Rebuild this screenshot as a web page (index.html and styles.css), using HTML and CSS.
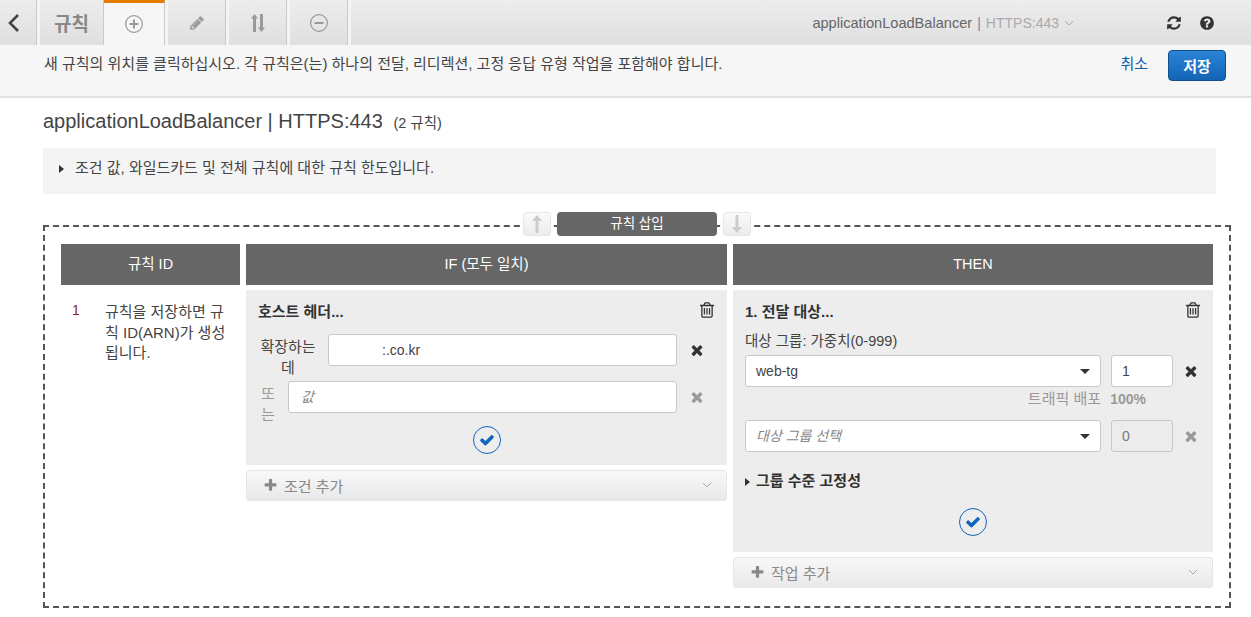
FILE: index.html
```html
<!DOCTYPE html>
<html lang="ko">
<head>
    <meta charset="UTF-8">
    <title>규칙</title>
    <link rel="stylesheet" href="styles.css">
</head>
<body>
    <svg class="icon-defs" width="0" height="0">
        <symbol id="i-check" viewBox="0 0 1792 1792"><path d="M1671 566q0 40-28 68l-724 724-136 136q-28 28-68 28t-68-28l-136-136-362-362q-28-28-28-68t28-68l136-136q28-28 68-28t68 28l294 295 656-657q28-28 68-28t68 28l136 136q28 28 28 68z"/></symbol>
        <symbol id="i-times" viewBox="0 0 1792 1792"><path d="M1490 1322q0 40-28 68l-136 136q-28 28-68 28t-68-28l-294-294-294 294q-28 28-68 28t-68-28l-136-136q-28-28-28-68t28-68l294-294-294-294q-28-28-28-68t28-68l136-136q28-28 68-28t68 28l294 294 294-294q28-28 68-28t68 28l136 136q28 28 28 68t-28 68l-294 294 294 294q28 28 28 68z"/></symbol>
        <symbol id="i-trash" viewBox="0 0 1792 1792"><path d="M704 736v576q0 14-9 23t-23 9h-64q-14 0-23-9t-9-23v-576q0-14 9-23t23-9h64q14 0 23 9t9 23zm256 0v576q0 14-9 23t-23 9h-64q-14 0-23-9t-9-23v-576q0-14 9-23t23-9h64q14 0 23 9t9 23zm256 0v576q0 14-9 23t-23 9h-64q-14 0-23-9t-9-23v-576q0-14 9-23t23-9h64q14 0 23 9t9 23zm128 724v-948h-896v948q0 22 7 40.5t14.5 27 10.5 8.5h832q3 0 10.5-8.5t14.5-27 7-40.5zm-672-1076h448l-48-117q-7-9-17-11h-317q-10 2-17 11zm928 32v64q0 14-9 23t-23 9h-96v948q0 83-47 143.5t-113 60.5h-832q-66 0-113-58.5t-47-141.5v-952h-96q-14 0-23-9t-9-23v-64q0-14 9-23t23-9h309l70-167q15-37 54-63t79-26h320q40 0 79 26t54 63l70 167h309q14 0 23 9t9 23z"/></symbol>
        <symbol id="i-plus" viewBox="0 0 1792 1792"><path d="M1600 736v192q0 40-28 68t-68 28h-416v416q0 40-28 68t-68 28h-192q-40 0-68-28t-28-68v-416h-416q-40 0-68-28t-28-68v-192q0-40 28-68t68-28h416v-416q0-40 28-68t68-28h192q40 0 68 28t28 68v416h416q40 0 68 28t28 68z"/></symbol>
    </svg>

    <div class="top-nav">
        <div class="nav-tab back-tab">
            <svg width="14" height="20" viewBox="0 0 14 20"><path d="M11 2 3 10l8 8" fill="none" stroke="#444" stroke-width="2.6"/></svg>
        </div>
        <div class="nav-tab title-tab">규칙</div>
        <div class="nav-tab active-tab">
            <svg width="20" height="20" viewBox="0 0 20 20"><circle cx="10" cy="10" r="8.4" fill="none" stroke="#999" stroke-width="1.2"/><path d="M10 5.5v9M5.5 10h9" stroke="#999" stroke-width="2"/></svg>
        </div>
        <div class="nav-tab">
            <svg width="16" height="16" viewBox="0 0 1792 1792" fill="#999"><path d="M491 1536l91-91-235-235-91 91v107h128v128h107zm523-928q0-22-22-22-10 0-17 7l-542 542q-7 7-7 17 0 22 22 22 10 0 17-7l542-542q7-7 7-17zm-54-192l416 416-832 832h-416v-416zm683 96q0 53-37 90l-166 166-416-416 166-165q36-38 90-38 53 0 91 38l235 234q37 39 37 91z"/></svg>
        </div>
        <div class="nav-tab">
            <svg width="14" height="18" viewBox="0 0 14 18" fill="#999"><path d="M3.5 0 7 4.5H5V18H2V4.500H0zM10.500 18 7 13.500h2V0h3v13.500h2z"/></svg>
        </div>
        <div class="nav-tab">
            <svg width="20" height="20" viewBox="0 0 20 20"><circle cx="10" cy="10" r="8.400" fill="none" stroke="#999" stroke-width="1.200"/><path d="M5.500 10h9" stroke="#999" stroke-width="2"/></svg>
        </div>
        <div class="nav-fill">
            <div class="listener">
                <span class="lb-name">applicationLoadBalancer</span>
                <span class="pipe">|</span>
                <span class="port">HTTPS:443</span>
                <svg width="10" height="6" viewBox="0 0 10 6"><path d="M1 1l4 4 4-4" fill="none" stroke="#aaa" stroke-width="1"/></svg>
            </div>
            <svg class="nav-icon" width="16" height="16" viewBox="0 0 1792 1792" fill="#333"><path d="M1639 1056q0 5-1 7-64 268-268 434.5t-478 166.5q-146 0-282.5-55t-243.5-157l-129 129q-19 19-45 19t-45-19-19-45v-448q0-26 19-45t45-19h448q26 0 45 19t19 45-19 45l-137 137q71 66 161 102t187 36q134 0 250-65t186-179q11-17 53-117 8-23 30-23h192q13 0 22.5 9.5t9.5 22.5zm25-800v448q0 26-19 45t-45 19h-448q-26 0-45-19t-19-45 19-45l138-138q-148-137-349-137-134 0-250 65t-186 179q-11 17-53 117-8 23-30 23h-199q-13 0-22.5-9.5t-9.5-22.5v-7q65-268 270-434.5t480-166.5q146 0 284 55.5t245 156.5l130-129q19-19 45-19t45 19 19 45z"/></svg>
            <svg class="nav-icon" width="16" height="16" viewBox="0 0 1792 1792" fill="#333"><path d="M1024 1376v-192q0-14-9-23t-23-9h-192q-14 0-23 9t-9 23v192q0 14 9 23t23 9h192q14 0 23-9t9-23zm256-672q0-88-55.5-163t-138.5-116-170-41q-243 0-371 213-15 24 8 42l132 100q7 6 19 6 16 0 25-12 53-68 86-92 34-24 86-24 48 0 85.5 26t37.5 59q0 38-20 61t-68 45q-63 28-115.5 86.5t-52.5 125.5v36q0 14 9 23t23 9h192q14 0 23-9t9-23q0-19 21.5-49.5t54.5-49.5q32-18 49-28.5t46-35 44.5-48 28-60.5 12.5-81zm384 192q0 209-103 385.5t-279.5 279.5-385.500 103-385.500-103-279.500-279.500-103-385.500 103-385.500 279.500-279.500 385.500-103 385.500 103 279.500 279.500 103 385.500z"/></svg>
        </div>
    </div>

    <div class="sub-bar">
        <p>새 규칙의 위치를 클릭하십시오. 각 규칙은(는) 하나의 전달, 리디렉션, 고정 응답 유형 작업을 포함해야 합니다.</p>
        <a class="cancel">취소</a>
        <button class="save-button">저장</button>
    </div>

    <div class="content">
        <h1>applicationLoadBalancer | HTTPS:443 <small>(2 규칙)</small></h1>

        <div class="limits"><span class="caret"></span>조건 값, 와일드카드 및 전체 규칙에 대한 규칙 한도입니다.</div>

        <div class="insert-area">
            <div class="insert-controls">
                <div class="arrow-button">
                    <svg width="10" height="18" viewBox="0 0 10 18" fill="#ccc"><path d="M5 0l5 6H6.500v12h-3V6H0z"/></svg>
                </div>
                <div class="insert-button">규칙 삽입</div>
                <div class="arrow-button">
                    <svg width="10" height="18" viewBox="0 0 10 18" fill="#ccc"><path d="M5 18l5-6H6.500V0h-3v12H0z"/></svg>
                </div>
            </div>

            <div class="rule-grid">
                <div class="col-head">규칙 ID</div>
                <div class="col-head">IF (모두 일치)</div>
                <div class="col-head">THEN</div>

                <div class="rule-id">
                    <span class="rule-num">1</span>
                    <p>규칙을 저장하면 규칙 ID(ARN)가 생성됩니다.</p>
                </div>

                <div class="rule-col">
                    <div class="panel if-panel">
                        <div class="panel-head">
                            <b>호스트 헤더...</b>
                            <svg class="trash"><use href="#i-trash"/></svg>
                        </div>
                        <div class="cond-row">
                            <label class="cond-label">확장하는 데</label>
                            <div class="field masked">:.co.kr</div>
                            <svg class="remove"><use href="#i-times"/></svg>
                        </div>
                        <div class="cond-row or-row">
                            <label class="cond-label">또는</label>
                            <div class="field placeholder">값</div>
                            <svg class="remove muted"><use href="#i-times"/></svg>
                        </div>
                        <div class="confirm"><span class="check-circle"><svg><use href="#i-check"/></svg></span></div>
                    </div>
                    <div class="add-bar">
                        <svg class="plus"><use href="#i-plus"/></svg>조건 추가
                        <svg class="add-chevron" viewBox="0 0 10 6"><path d="M1 1l4 4 4-4" fill="none" stroke="#aaa" stroke-width="1"/></svg>
                    </div>
                </div>

                <div class="rule-col">
                    <div class="panel then-panel">
                        <div class="panel-head">
                            <b>1. 전달 대상...</b>
                            <svg class="trash"><use href="#i-trash"/></svg>
                        </div>
                        <div class="target-label">대상 그룹: 가중치(0-999)</div>
                        <div class="target-row">
                            <div class="field select">web-tg<span class="select-arrow"></span></div>
                            <div class="field weight">1</div>
                            <svg class="remove"><use href="#i-times"/></svg>
                        </div>
                        <div class="traffic">트래픽 배포 <b>100%</b></div>
                        <div class="target-row">
                            <div class="field select placeholder">대상 그룹 선택<span class="select-arrow"></span></div>
                            <div class="field weight disabled">0</div>
                            <svg class="remove muted"><use href="#i-times"/></svg>
                        </div>
                        <div class="stickiness"><span class="caret"></span>그룹 수준 고정성</div>
                        <div class="confirm"><span class="check-circle"><svg><use href="#i-check"/></svg></span></div>
                    </div>
                    <div class="add-bar">
                        <svg class="plus"><use href="#i-plus"/></svg>작업 추가
                        <svg class="add-chevron" viewBox="0 0 10 6"><path d="M1 1l4 4 4-4" fill="none" stroke="#aaa" stroke-width="1"/></svg>
                    </div>
                </div>
            </div>
        </div>
    </div>
</body>
</html>
```

FILE: styles.css
```css
* {
    box-sizing: border-box;
}

body {
    margin: 0;
    height: 617px;
    overflow: hidden;
    background-color: #fff;
    color: #444;
    font-family: "Liberation Sans", "Noto Sans CJK KR", sans-serif;
    font-size: 14px;
}

.icon-defs {
    position: absolute;
}

/* top bar */
.top-nav {
    display: flex;
    height: 45px;
    background-color: #f4f4f4;
}

.nav-tab {
    display: flex;
    justify-content: center;
    align-items: center;
    width: 58px;
    margin-right: 3px;
    background: linear-gradient(#ededed, #dfdfdf);
    border-right: 1px solid #c9c9c9;
}

.back-tab {
    width: 37px;
    justify-content: flex-start;
    padding-left: 7px;
}

.title-tab {
    width: 64px;
    margin-right: 0;
    color: #888;
    font-size: 19px;
    font-weight: bold;
}

.active-tab {
    width: 61px;
    background: #f6f6f6;
    border-top: 3px solid #e57a00;
    border-right: 1px solid #c9c9c9;
}

.nav-fill {
    flex: 1;
    display: flex;
    align-items: center;
    justify-content: flex-end;
    padding-right: 36px;
    background: linear-gradient(#ededed, #dfdfdf);
}

.listener {
    display: flex;
    align-items: center;
    gap: 5px;
    margin-right: 75px;
    color: #666;
}

.lb-name {
    font-size: 14.6px;
}

.pipe {
    color: #6a86a8;
}

.port {
    color: #aaa;
}

.nav-icon {
    margin-left: 17px;
}

.sub-bar {
    display: flex;
    align-items: flex-start;
    height: 53px;
    padding: 5px 25px 0 44px;
    background-color: #f6f6f6;
    border-bottom: 2px solid #e2e2e2;
}

.sub-bar p {
    flex: 1;
    margin: 2px 0 0;
    color: #444;
    font-size: 15px;
}

.cancel {
    margin: 2px 20px 0 0;
    color: #0b5cad;
    font-size: 15px;
}

.save-button {
    width: 58px;
    height: 31px;
    padding: 0;
    background: linear-gradient(#2a84d8, #1464b4);
    border: 1px solid #0f4f8f;
    border-radius: 4px;
    color: #fff;
    font: bold 15px "Liberation Sans", "Noto Sans CJK KR", sans-serif;
}

/* page content */
.content {
    padding: 0 20px 0 43px;
}

h1 {
    margin: 9px 0 11px;
    color: #444;
    font-size: 20px;
    font-weight: normal;
    line-height: 28px;
}

h1 small {
    margin-left: 5px;
    font-size: 14.5px;
}

.limits {
    height: 46px;
    margin-right: 15px;
    padding: 8px 16px;
    background-color: #f4f4f4;
    font-size: 15px;
}

.caret {
    display: inline-block;
    margin-right: 11px;
    border-left: 5px solid #333;
    border-top: 4px solid transparent;
    border-bottom: 4px solid transparent;
}

.insert-area {
    position: relative;
    height: 383px;
    margin-top: 31px;
    padding: 17px 16px 0;
    border: 2px dashed #555;
}

.insert-controls {
    position: absolute;
    top: -15px;
    left: 478px;
    display: flex;
    gap: 6px;
}

.arrow-button {
    display: flex;
    justify-content: center;
    align-items: center;
    width: 28px;
    height: 24px;
    background: linear-gradient(#fafafa, #ececec);
    border: 1px solid #e6e6e6;
    border-radius: 3px;
}

.insert-button {
    width: 160px;
    height: 24px;
    background-color: #666;
    border-radius: 4px;
    color: #fff;
    font-size: 13.5px;
    line-height: 24px;
    text-align: center;
}

.rule-grid {
    display: grid;
    grid-template-columns: 179px 481px 480px;
    grid-template-rows: 41px auto;
    gap: 5px 6px;
}

.col-head {
    background-color: #666;
    color: #fff;
    font-size: 14.5px;
    line-height: 41px;
    text-align: center;
}

.rule-id {
    display: flex;
    padding: 12px 11px 0;
}

.rule-num {
    width: 33px;
    flex-shrink: 0;
    color: #8a2a10;
}

.rule-id p {
    margin: 0;
    font-size: 15px;
    line-height: 20.5px;
}

.rule-col {
    display: flex;
    flex-direction: column;
    gap: 5px;
}

.panel {
    padding: 12px 12px 0;
    background-color: #ededed;
}

.if-panel {
    height: 175px;
}

.then-panel {
    height: 262px;
}

.panel-head {
    display: flex;
    justify-content: space-between;
    align-items: center;
    height: 16px;
    color: #333;
    font-size: 15px;
}

.trash {
    width: 18px;
    height: 18px;
    margin-right: -1px;
    fill: #333;
}

.field {
    height: 32px;
    padding: 0 10px;
    background-color: #fff;
    border: 1px solid #c8c8c8;
    border-radius: 3px;
    color: #444;
    line-height: 30px;
}

.placeholder {
    color: #888;
    font-style: italic;
}

.masked {
    padding-left: 53px;
}

.cond-row {
    display: flex;
    align-items: flex-start;
    margin-top: 16px;
}

.or-row {
    margin-top: 3px;
}

.cond-label {
    width: 60px;
    margin: 3px 10px 0 0;
    font-size: 15px;
    line-height: 20.5px;
    text-align: center;
}

.or-row .cond-label {
    width: 20px;
    color: #999;
}

.cond-row .field {
    flex: 1;
}

.or-row .field {
    padding-left: 12px;
}

.remove {
    flex-shrink: 0;
    width: 16px;
    height: 16px;
    margin: 8px 10px 0 12px;
    fill: #333;
}

.remove.muted {
    fill: #999;
}

.confirm {
    display: flex;
    justify-content: center;
}

.if-panel .confirm {
    margin-top: 1px;
}

.then-panel .confirm {
    margin-top: 18px;
}

.check-circle {
    display: flex;
    justify-content: center;
    align-items: center;
    width: 28px;
    height: 28px;
    border: 1px solid #1166bb;
    border-radius: 50%;
}

.check-circle svg {
    width: 16px;
    height: 16px;
    fill: #1166bb;
}

.target-label {
    margin-top: 14px;
    font-size: 14.5px;
    line-height: 18px;
}

.target-row {
    display: flex;
    align-items: flex-start;
    margin-top: 5px;
}

.target-row .remove {
    margin: 8px 2px 0 10px;
}

.select {
    position: relative;
    flex: 1;
}

.select-arrow {
    position: absolute;
    top: 13px;
    right: 10px;
    border-top: 5px solid #333;
    border-left: 5px solid transparent;
    border-right: 5px solid transparent;
}

.weight {
    width: 62px;
    flex-shrink: 0;
    margin-left: 10px;
}

.weight.disabled {
    background-color: #ececec;
    color: #777;
}

.traffic {
    margin: 2px 55px 11px 0;
    color: #999;
    font-size: 15px;
    line-height: 20px;
    text-align: right;
}

.traffic b {
    margin-left: 5px;
    font-size: 14px;
}

.stickiness {
    margin-top: 20px;
    color: #333;
    font-size: 15px;
    font-weight: bold;
    line-height: 18px;
}

.stickiness .caret {
    margin-right: 6px;
}

.add-bar {
    position: relative;
    display: flex;
    align-items: center;
    height: 31px;
    padding-left: 16px;
    background: linear-gradient(#f8f8f8, #e9e9e9);
    border: 1px solid #e6e6e6;
    border-radius: 3px;
    color: #888;
    font-size: 15px;
}

.plus {
    width: 15px;
    height: 15px;
    margin-right: 6px;
    fill: #888;
}

.add-chevron {
    position: absolute;
    right: 14px;
    top: 11px;
    width: 10px;
    height: 6px;
}
```
